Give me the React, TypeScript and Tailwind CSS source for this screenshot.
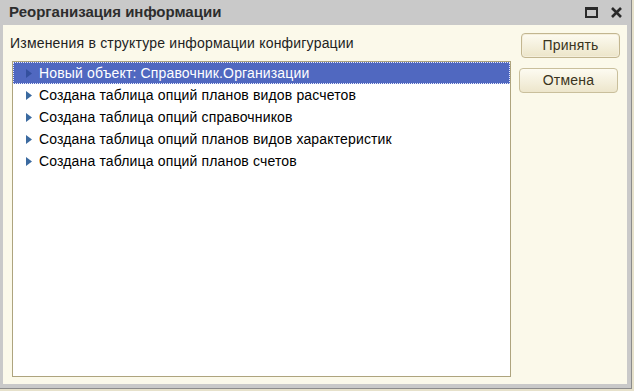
import React from "react";

const items = [
  "Новый объект: Справочник.Организации",
  "Создана таблица опций планов видов расчетов",
  "Создана таблица опций справочников",
  "Создана таблица опций планов видов характеристик",
  "Создана таблица опций планов счетов",
];

function Tri({ selected }: { selected: boolean }) {
  return (
    <svg width="6" height="9" viewBox="0 0 6 9" className="shrink-0">
      <path d="M0 0 L6 4.5 L0 9 Z" fill={selected ? "#34509e" : "#3b6aa0"} />
    </svg>
  );
}

export default function App() {
  return (
    <div
      className="w-[634px] h-[391px] bg-[#e6e1cb] overflow-hidden"
      style={{ fontFamily: '"Liberation Sans", Arial, sans-serif' }}
    >
      <div className="w-[632px] h-[389px] bg-[#c9c9c9] border-r border-b border-[#8c8c8c] flex flex-col">
        {/* Title bar */}
        <div className="h-[25px] flex items-center pl-[9px] pr-[9px] shrink-0">
          <span className="text-[15px] font-bold text-[#2d2d2d]">Реорганизация информации</span>
          <div className="ml-auto flex items-center gap-[13px]">
            <div className="w-[13px] h-[11px] border-2 border-t-[3px] border-[#2a2a2a]" />
            <svg width="11" height="11" viewBox="0 0 11 11">
              <path d="M1 1 L10 10 M10 1 L1 10" stroke="#2a2a2a" strokeWidth="2.6" />
            </svg>
          </div>
        </div>
        {/* Content */}
        <div className="flex-1 ml-[3px] mr-[4px] mb-[4px] bg-[#fbf9ea] flex">
          <div className="w-[508px] flex flex-col">
            <div className="h-[36px] flex items-center pl-[7px] text-[14px] tracking-[0.2px] text-[#222]">
              Изменения в структуре информации конфигурации
            </div>
            <div className="flex-1 ml-[9px] mb-[7px] border border-[#aea47e] bg-white">
              {items.map((t, i) => {
                const sel = i === 0;
                return (
                  <div
                    key={t}
                    className={
                      sel
                        ? "h-[22px] flex items-center pl-[12px] bg-[#5068c0] text-white border border-dotted border-[#e8ecff]"
                        : "h-[22px] flex items-center pl-[13px] text-black"
                    }
                  >
                    <Tri selected={sel} />
                    <span className="ml-[7px] text-[14px] tracking-[0.15px]">{t}</span>
                  </div>
                );
              })}
            </div>
          </div>
          <div className="flex flex-col gap-[10px] pt-[8px] pl-[10px]">
            <button className="w-[99px] h-[25px] rounded-[4px] border border-[#c2b690] shadow-[inset_0_0_0_1px_#f4eedb] bg-gradient-to-b from-[#fdfbf1] to-[#ece5c9] text-[14px] tracking-[0.2px] text-[#3a3420]">
              Принять
            </button>
            <button className="w-[99px] h-[25px] -ml-[2px] rounded-[4px] border border-[#c9bf9c] bg-gradient-to-b from-[#fdfbf1] to-[#ede6cc] text-[14px] tracking-[0.2px] text-[#3a3420]">
              Отмена
            </button>
          </div>
        </div>
      </div>
    </div>
  );
}
